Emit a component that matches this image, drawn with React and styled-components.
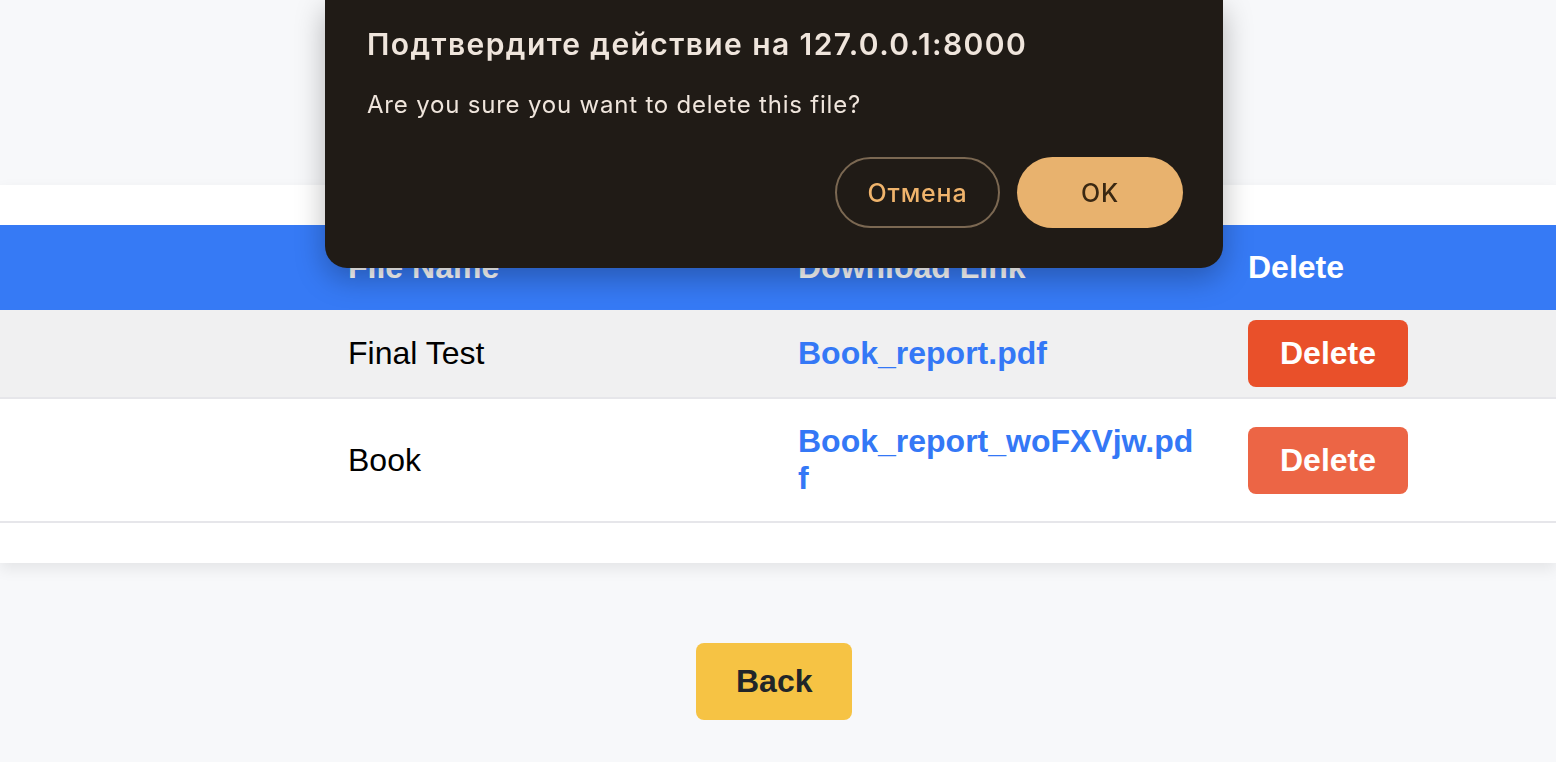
import React from 'react';
import styled, { createGlobalStyle } from 'styled-components';

const GlobalStyle = createGlobalStyle`
  html, body {
    margin: 0;
    padding: 0;
    background: #f7f8fa;
    font-family: "Liberation Sans", Arial, sans-serif;
    overflow: hidden;
  }
`;

const Page = styled.div`
  min-height: 762px;
  padding-top: 185px;
  box-sizing: border-box;
`;

const Card = styled.div`
  background: #ffffff;
  padding: 40px 0;
  box-shadow: 0 6px 14px rgba(0, 0, 0, 0.08);
`;

const Row = styled.div`
  display: grid;
  grid-template-columns: 450px 450px 1fr;
  align-items: center;
  padding-left: 328px;
  background: ${(p) => p.$bg || '#ffffff'};
  border-bottom: ${(p) => (p.$divider ? '2px solid #e6e6ea' : 'none')};
`;

const HeadCell = styled.div`
  padding: 24px 20px;
  font-size: 32px;
  line-height: 37px;
  font-weight: 700;
  color: #ffffff;
`;

const Cell = styled.div`
  padding: ${(p) => (p.$tight ? '10px 20px' : '24px 20px')};
  font-size: 32px;
  line-height: 37px;
  color: #000000;
`;

const FileLink = styled.a`
  display: block;
  max-width: 402px;
  color: #3478f6;
  font-weight: 700;
  text-decoration: none;
  word-break: break-all;
`;

const DeleteButton = styled.button`
  display: block;
  font-family: inherit;
  font-size: 32px;
  line-height: 37px;
  font-weight: 700;
  color: #ffffff;
  background: ${(p) => (p.$hover ? '#e9502a' : '#ec6545')};
  border: none;
  border-radius: 8px;
  padding: 15px 32px;
  width: 160px;
  cursor: pointer;
`;

const Footer = styled.div`
  display: flex;
  justify-content: center;
  margin-top: 80px;
  padding-right: 8px;
`;

const BackButton = styled.button`
  font-family: inherit;
  font-size: 32px;
  line-height: 37px;
  font-weight: 700;
  color: #212529;
  background: #f6c344;
  border: none;
  border-radius: 8px;
  padding: 20px 40px;
  width: 156px;
  cursor: pointer;
`;

const Dialog = styled.div`
  position: fixed;
  top: 0;
  left: 325px;
  width: 898px;
  box-sizing: border-box;
  padding: 27px 40px 40px 42px;
  background: #201b16;
  border-radius: 0 0 22px 22px;
  box-shadow: 0 10px 30px rgba(0, 0, 0, 0.28);
  font-family: Inter, "Noto Sans", sans-serif;
  color: #efe5dc;
`;

const DialogTitle = styled.div`
  font-size: 30px;
  line-height: 34px;
  font-weight: 600;
  letter-spacing: 1.4px;
`;

const DialogMessage = styled.div`
  margin-top: 29px;
  font-size: 24px;
  line-height: 30px;
  letter-spacing: 0.8px;
`;

const DialogActions = styled.div`
  display: flex;
  justify-content: flex-end;
  gap: 17px;
  margin-top: 37px;
`;

const PillButton = styled.button`
  font-family: inherit;
  font-size: 25px;
  font-weight: 500;
  letter-spacing: 0.8px;
  height: 71px;
  width: ${(p) => (p.$primary ? '166px' : '165px')};
  border-radius: 36px;
  box-sizing: border-box;
  cursor: pointer;
  border: ${(p) => (p.$primary ? 'none' : '2px solid #7b6852')};
  background: ${(p) => (p.$primary ? '#e8b26e' : 'transparent')};
  color: ${(p) => (p.$primary ? '#3a2812' : '#f0b46c')};
`;

const files = [
  { name: 'Final Test', file: 'Book_report.pdf', hover: true },
  { name: 'Book', file: 'Book_report_woFXVjw.pdf', hover: false },
];

export default function App() {
  return (
    <>
      <GlobalStyle />
      <Page>
        <Card>
          <Row $bg="#367af5">
            <HeadCell>File Name</HeadCell>
            <HeadCell>Download Link</HeadCell>
            <HeadCell>Delete</HeadCell>
          </Row>
          {files.map((f) => (
            <Row key={f.file} $bg={f.hover ? '#f0f0f1' : '#ffffff'} $divider>
              <Cell>{f.name}</Cell>
              <Cell>
                <FileLink href="#">{f.file}</FileLink>
              </Cell>
              <Cell $tight>
                <DeleteButton $hover={f.hover}>Delete</DeleteButton>
              </Cell>
            </Row>
          ))}
        </Card>
        <Footer>
          <BackButton>Back</BackButton>
        </Footer>
      </Page>
      <Dialog>
        <DialogTitle>Подтвердите действие на 127.0.0.1:8000</DialogTitle>
        <DialogMessage>Are you sure you want to delete this file?</DialogMessage>
        <DialogActions>
          <PillButton>Отмена</PillButton>
          <PillButton $primary>OK</PillButton>
        </DialogActions>
      </Dialog>
    </>
  );
}
